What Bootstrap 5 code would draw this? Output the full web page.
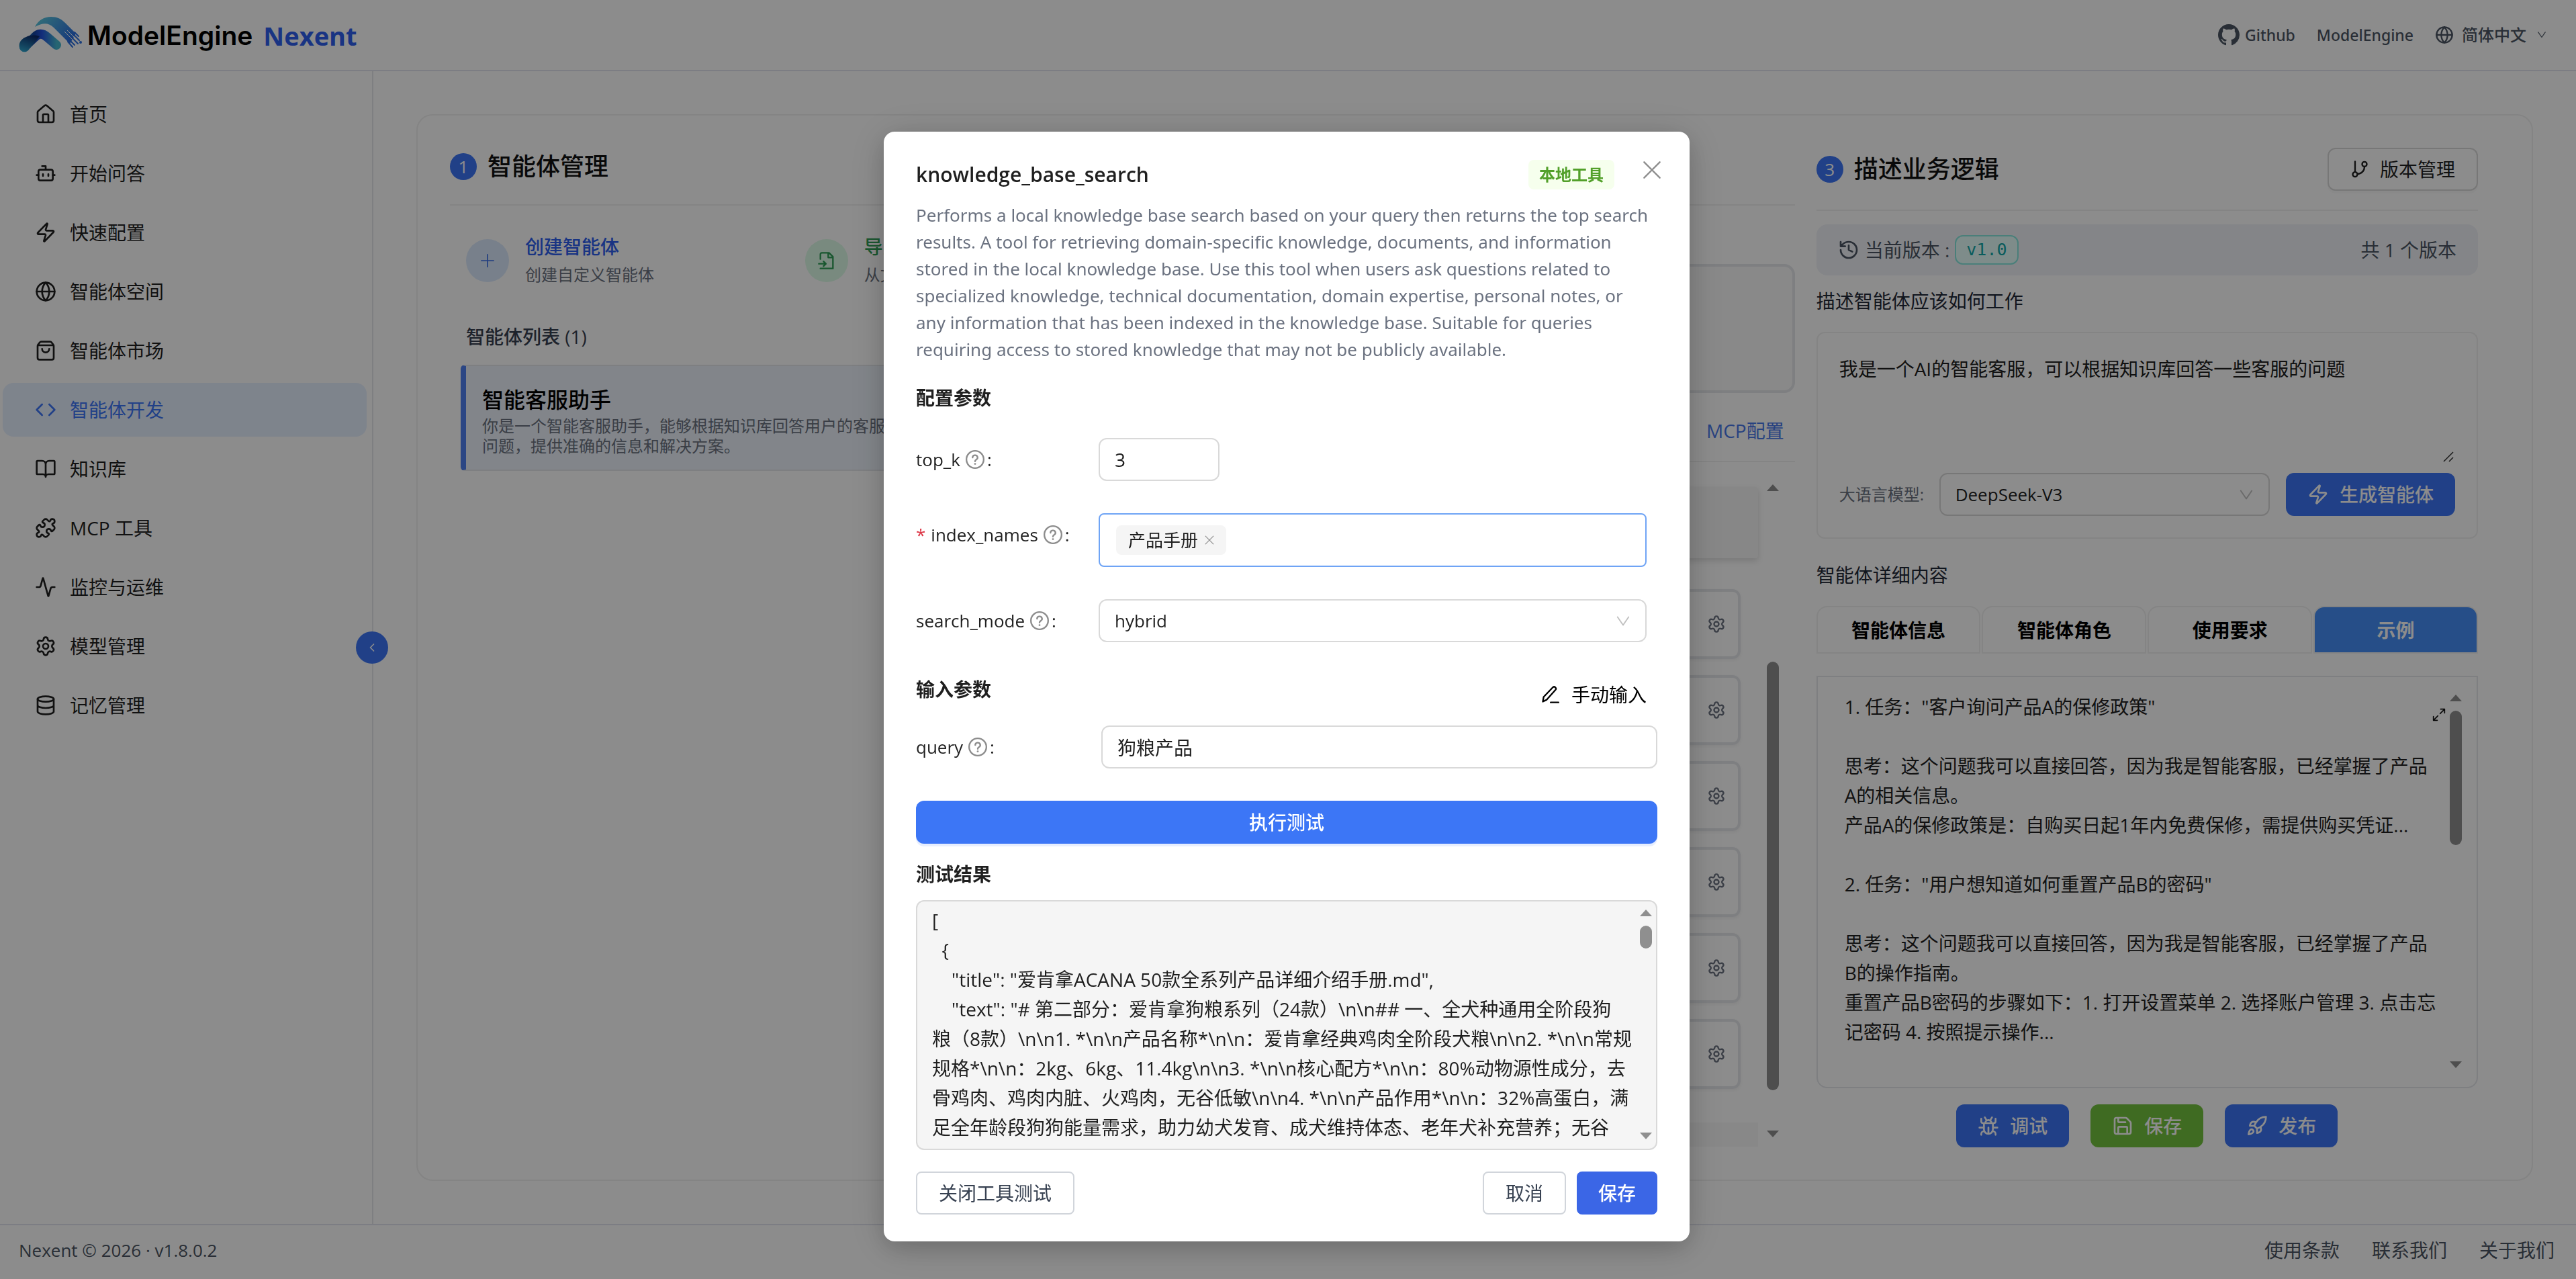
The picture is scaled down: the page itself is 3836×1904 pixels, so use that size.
<!DOCTYPE html>
<html lang="zh-CN">
<head>
<meta charset="utf-8">
<meta name="viewport" content="width=device-width, initial-scale=1">
<title>Nexent</title>
<link href="https://cdn.jsdelivr.net/npm/bootstrap@5.3.0/dist/css/bootstrap.min.css" rel="stylesheet">
<style>
  :root { --nx-blue: #3c76f6; --nx-line: #f0f0f0; --nx-edge: #e5e7eb; }
  body { font-family: "Open Sans", "Noto Sans CJK SC", sans-serif; font-size: 28px; line-height: 44px; color: #1f1f1f; background: #fff; }
  .latin { font-size: 26px; }
  svg { display: block; flex: none; }
  .ln { fill: none; stroke: currentColor; stroke-width: 2; stroke-linecap: round; stroke-linejoin: round; }
  .i14 { width: 14px; height: 14px; } .i20 { width: 20px; height: 20px; } .i28 { width: 28px; height: 28px; } .i32 { width: 32px; height: 32px; }
  a { color: inherit; text-decoration: none; }
  h1, h2, h3, p { margin: 0; }
  button { white-space: nowrap; }

  .site-head { height: 106px; padding: 0 44px 0 28px; border-bottom: 2px solid #e2e4ee; }
  .brand-name { font-size: 39px; font-weight: 600; color: #000; font-family: "Inter", sans-serif; padding-top: 2px; }
  .brand-sub { font-size: 38px; font-weight: 700; color: #2f5fee; padding-top: 2px; }
  .head-links { font-size: 24px; font-weight: 500; color: #4b5563; gap: 32px; }
  .head-links .latin { font-size: 23px; font-family: "Noto Sans", sans-serif; }

  .side { width: 556px; padding: 24px 8px 0 4px; border-right: 2px solid var(--nx-edge); }
  .side .nav { gap: 8px; }
  .side .nav-link { height: 80px; padding: 0 48px; gap: 20px; border-radius: 16px; color: #1f1f1f; width: 542px; }
  .side .nav-link.active { background: #e6f0ff; color: var(--nx-blue); }
  .fold { position: absolute; right: -24px; top: 834px; width: 48px; height: 48px; border: 0; border-radius: 50%; background: var(--nx-blue); color: #fff; padding: 0; }

  .board { margin: 64px; padding: 48px 80px 48px 48px; border: 2px solid var(--nx-line); border-radius: 24px; gap: 32px; }
  .pane { flex: 1 1 0; min-width: 0; }
  .pane-head { height: 86px; border-bottom: 2px solid var(--nx-line); gap: 16px; padding-bottom: 28px; }
  .pane-head.tall { height: 94px; }
  .pane-head h2 { font-size: 36px; font-weight: 500; color: #111; }
  .num { width: 40px; height: 40px; border-radius: 50%; background: var(--nx-blue); color: #fff; font-size: 26px; line-height: 40px; text-align: center; }

  .acts { padding: 40px 0 49px 24px; }
  .act { flex: 1 1 0; gap: 24px; border: 0; background: none; padding: 0; text-align: left; line-height: 42px; }
  .disc { width: 64px; height: 64px; border-radius: 50%; }
  .act strong { display: block; font-weight: 500; }
  .act small { display: block; font-size: 24px; color: #6b7280; }
  .act-new .disc { background: #dbeafe; color: #3b6fe8; } .act-new strong { color: #2f5fee; }
  .act-in .disc { background: #dcfce7; color: #2f9e57; } .act-in strong { color: #2f9e57; }
  .list-cap { color: #374151; font-weight: 500; }
  .agent { margin: 20px 0 0 16px; border: 2px solid var(--nx-edge); border-left: 8px solid #4f80f0; background: #edf3fb; padding: 26px 320px 20px 24px; border-radius: 6px 0 0 6px; }
  .agent h3 { font-size: 32px; font-weight: 500; line-height: 48px; color: #000; }
  .agent p { font-size: 24px; line-height: 30px; color: #6b7280; }

  .picked { height: 192px; margin-top: 87px; border: 4px solid var(--nx-edge); border-radius: 16px; background: #fafafa; }
  .tool-bar { height: 103px; border-bottom: 2px solid var(--nx-line); padding: 10px 16px 0 0; color: #4a78ea; }
  .tool-zone { padding: 37px 24px 0 0; }
  .tool-list { gap: 24px; margin: 46px 26px 0 0; }
  .tool-top { height: 106px; background: #f6f6f6; box-shadow: 0 4px 10px rgba(0,0,0,.14); border-radius: 4px; }
  .tool-end { height: 36px; background: #f7f7f7; margin-top: 50px; }
  .tool-card { height: 104px; border: 4px solid var(--nx-edge); border-radius: 12px; padding: 0 18px; color: #6b7280; box-shadow: 0 2px 4px rgba(0,0,0,.06); }

  .sb { width: 18px; color: #8f8f8f; }
  .sb svg { width: 18px; height: 10px; fill: currentColor; }
  .sb i { display: block; background: currentColor; border-radius: 9px; width: 18px; margin-top: 14px; }
  .sb-tools { margin: -4px 0 14px 13px; } .sb-tools i { height: 638px; margin: auto 0 60px; }
  .sb-sample { margin-left: 18px; } .sb-sample i { height: 200px; }
  .sb-out { margin-left: 8px; padding: 2px 0 4px; } .sb-out i { height: 34px; }

  .verbar { margin-top: 20px; height: 76px; border-radius: 16px; background: #f0f3f7; padding: 0 32px; color: #4b5563; }
  .ver { border: 2px solid #87e8de; border-radius: 12px; background: #e6fffb; color: #13a8a8; font-family: "DejaVu Sans Mono", monospace; font-size: 25px; line-height: 40px; padding: 0 15px; }
  .cap { color: #1f2937; }
  .cap-next { margin-top: 32px; }
  .brief { margin-top: 24px; border: 2px solid var(--nx-line); border-radius: 12px; padding: 24px 32px 32px; height: 308px; }
  .brief textarea { border: 0; padding: 7px 0; height: 168px; resize: none; outline: 0; line-height: 44px; color: #1f1f1f; }
  .grip { position: absolute; right: 2px; bottom: 0; width: 16px; height: 16px; }
  .llm-cap { font-size: 24px; color: #6b7280; width: 149px; }
  .nx-select { height: 64px; border: 2px solid #d9d9d9; border-radius: 12px; padding: 0 22px; appearance: none; background: #fff; color: #1f1f1f; width: 100%; font-size: 26px; }
  .chev { position: absolute; right: 24px; top: 22px; width: 22px; height: 22px; color: #bfbfbf; pointer-events: none; }
  .nx-btn { height: 64px; border: 0; border-radius: 12px; display: inline-flex; align-items: center; justify-content: center; gap: 16px; padding: 0 32px; line-height: 44px; color: #fff; font-weight: 500; font-size: 28px; }
  .nx-blue { background: var(--nx-blue); }
  .nx-green { background: #74c43e; }
  .nx-plain { background: #fff; border: 2px solid #d9d9d9; color: #1f1f1f; font-weight: 400; box-shadow: 0 4px 0 rgba(0,0,0,.02); }
  .tabs4 { gap: 2px; margin-top: 24px; }
  .tabs4 button { flex: 1 1 0; height: 71px; border: 2px solid var(--nx-line); border-radius: 16px 16px 0 0; background: #fff; font-weight: 700; color: #000; padding: 0; }
  .tabs4 button.active { background: #458ff8; color: #fff; }
  .sample { margin-top: 33px; border: 2px solid var(--nx-edge); border-radius: 0 0 16px 16px; flex: 1 1 0; padding: 26px 22px 28px 40px; }
  .sample-text { flex: 1 1 0; white-space: pre-wrap; margin-top: -4px; }
  .expand { position: absolute; right: 46px; top: 46px; border: 0; background: none; padding: 0; color: #111; }
  .pane-foot { gap: 32px; margin-top: 24px; }

  .site-foot { height: 82px; padding: 0 32px 6px 28px; border-top: 2px solid #e2e4ee; color: #4b5563; }

  .modal-backdrop.show { opacity: .45; }
  .modal { padding-right: 4px; }
  .modal-dialog { max-width: 1200px; margin: 196px auto 56px; }
  .modal-content { border: 0; border-radius: 16px; padding: 42px 48px 40px; box-shadow: 0 12px 32px rgba(0,0,0,.12), 0 6px 60px rgba(0,0,0,.16); color: #1f1f1f; }
  .modal-name { font-size: 30px; font-weight: 600; line-height: 44px; }
  .kind { background: #f6ffed; color: #52a02a; font-size: 24px; font-weight: 700; border-radius: 8px; padding: 0 16px; margin-right: 42px; }
  .x-btn { border: 0; background: none; padding: 0; color: #8c8c8c; margin: 0 -6px 14px 0; }
  .intro { font-family: "Noto Sans", sans-serif; font-size: 26px; line-height: 40px; color: #6b7280; margin-top: 18px; padding-right: 8px; }
  .sect { font-size: 28px; line-height: 44px; font-weight: 700; }
  .sect-conf { margin-top: 30px; }
  .sect-in { margin-top: 48px; padding-right: 16px; }
  .sect-out { margin-top: 23px; }
  .frow { display: flex; margin-top: 48px; padding-right: 16px; }
  .frow.first { margin-top: 38px; }
  .flab { width: 272px; flex: none; height: 64px; display: flex; align-items: center; gap: 8px; font-size: 26px; }
  .flab svg { color: #8c8c8c; margin-right: -4px; }
  .frow.wide { padding-right: 0; margin-top: 24px; } .frow.wide > .flab { width: 276px; }
  .nx-input { height: 64px; border: 2px solid #d9d9d9; border-radius: 12px; padding: 0 22px; color: #1f1f1f; background: #fff; }
  .nx-short { width: 180px; }
  .picks { height: 80px; border: 2px solid #6fa4f5; border-radius: 8px; padding: 0 24px; }
  .picks input { outline: 0; }
  .pick { background: #f5f5f5; border-radius: 8px; font-size: 26px; line-height: 44px; padding: 0 18px; gap: 10px; }
  .pick button { border: 0; background: none; padding: 0; color: #8c8c8c; }
  .link-btn { border: 0; background: none; padding: 0; gap: 18px; line-height: 44px; }
  .run { margin-top: 48px; box-shadow: 0 4px 0 rgba(60,118,246,.12); }
  .result { height: 372px; border: 2px solid #d9d9d9; border-radius: 12px; background: #f5f5f5; padding: 10px 6px 10px 22px; margin-top: 17px; }
  .result textarea { flex: 1 1 0; border: 0; background: none; resize: none; padding: 0; margin-top: -4px; outline: 0; overflow: hidden; line-height: 44px; color: #1f1f1f; }
  .modal-acts { margin-top: 32px; gap: 16px; }
  .foot-btn { border-radius: 8px; background: #3b66e6; }
  .foot-plain { background: #fff; border: 2px solid #d1d5db; color: #374151; font-weight: 400; }
</style>
</head>
<body class="d-flex flex-column min-vh-100">
<svg width="0" height="0" class="position-absolute" aria-hidden="true">
  <symbol id="home" viewBox="0 0 24 24"><path class="ln" d="M15 21v-8a1 1 0 0 0-1-1h-4a1 1 0 0 0-1 1v8M3 10a2 2 0 0 1 .7-1.5l7-6a2 2 0 0 1 2.6 0l7 6A2 2 0 0 1 21 10v9a2 2 0 0 1-2 2H5a2 2 0 0 1-2-2z"/></symbol>
  <symbol id="bot" viewBox="0 0 24 24"><path class="ln" d="M12 8V4H8M2 14h2M20 14h2M15 13v2M9 13v2"/><rect class="ln" x="4" y="8" width="16" height="12" rx="2"/></symbol>
  <symbol id="zap" viewBox="0 0 24 24"><path class="ln" d="M4 14a1 1 0 0 1-.78-1.63l9.9-10.2a.5.5 0 0 1 .86.46l-1.92 6.02A1 1 0 0 0 13 10h7a1 1 0 0 1 .78 1.63l-9.9 10.2a.5.5 0 0 1-.86-.46l1.92-6.02A1 1 0 0 0 11 14z"/></symbol>
  <symbol id="globe" viewBox="0 0 24 24"><circle class="ln" cx="12" cy="12" r="10"/><path class="ln" d="M12 2a14.5 14.5 0 0 0 0 20 14.500 14.500 0 0 0 0-20M2 12h20"/></symbol>
  <symbol id="bag" viewBox="0 0 24 24"><path class="ln" d="M16 10a4 4 0 0 1-8 0M3.100 6.030h17.800M3.400 5.470A2 2 0 0 0 3 6.670V20a2 2 0 0 0 2 2h14a2 2 0 0 0 2-2V6.670a2 2 0 0 0-.4-1.200l-2-2.670A2 2 0 0 0 17 2H7a2 2 0 0 0-1.600.8z"/></symbol>
  <symbol id="code" viewBox="0 0 24 24"><path class="ln" d="m16 18 6-6-6-6M8 6l-6 6 6 6"/></symbol>
  <symbol id="book" viewBox="0 0 24 24"><path class="ln" d="M12 7v14M3 18a1 1 0 0 1-1-1V4a1 1 0 0 1 1-1h5a4 4 0 0 1 4 4 4 4 0 0 1 4-4h5a1 1 0 0 1 1 1v13a1 1 0 0 1-1 1h-6a3 3 0 0 0-3 3 3 3 0 0 0-3-3z"/></symbol>
  <symbol id="puzzle" viewBox="0 0 24 24"><path class="ln" d="M15.390 4.390a1 1 0 0 0 1.680-.474 2.500 2.500 0 1 1 3.014 3.015 1 1 0 0 0-.474 1.680l1.683 1.682a2.414 2.414 0 0 1 0 3.414L19.610 15.390a1 1 0 0 1-1.680-.474 2.500 2.500 0 1 0-3.014 3.015 1 1 0 0 1 .474 1.680l-1.683 1.682a2.414 2.414 0 0 1-3.414 0L8.610 19.610a1 1 0 0 0-1.680.474 2.500 2.500 0 1 1-3.014-3.015 1 1 0 0 0 .474-1.680l-1.683-1.682a2.414 2.414 0 0 1 0-3.414L4.390 8.610a1 1 0 0 1 1.680.474 2.500 2.500 0 1 0 3.014-3.015 1 1 0 0 1-.474-1.680l1.683-1.682a2.414 2.414 0 0 1 3.414 0z"/></symbol>
  <symbol id="pulse" viewBox="0 0 24 24"><path class="ln" d="M22 12h-2.480a2 2 0 0 0-1.930 1.460l-2.350 8.360a.25.25 0 0 1-.48 0L9.240 2.180a.25.25 0 0 0-.48 0l-2.350 8.360A2 2 0 0 1 4.490 12H2"/></symbol>
  <symbol id="gear" viewBox="0 0 24 24"><path class="ln" d="M9.671 4.136a2.340 2.340 0 0 1 4.659 0 2.340 2.340 0 0 0 3.319 1.915 2.340 2.340 0 0 1 2.330 4.033 2.340 2.340 0 0 0 0 3.831 2.340 2.340 0 0 1-2.330 4.033 2.340 2.340 0 0 0-3.319 1.915 2.340 2.340 0 0 1-4.659 0 2.340 2.340 0 0 0-3.320-1.915 2.340 2.340 0 0 1-2.330-4.033 2.340 2.340 0 0 0 0-3.831A2.340 2.340 0 0 1 6.350 6.051a2.340 2.340 0 0 0 3.319-1.915"/><circle class="ln" cx="12" cy="12" r="3"/></symbol>
  <symbol id="db" viewBox="0 0 24 24"><ellipse class="ln" cx="12" cy="5" rx="9" ry="3"/><path class="ln" d="M3 5v14a9 3 0 0 0 18 0V5M3 12a9 3 0 0 0 18 0"/></symbol>
  <symbol id="left" viewBox="0 0 24 24"><path class="ln" d="m15 18-6-6 6-6"/></symbol>
  <symbol id="down" viewBox="0 0 24 24"><path class="ln" d="m3 5 9 13 9-13"/></symbol>
  <symbol id="cross" viewBox="0 0 24 24"><path class="ln" d="M2 2l20 20M22 2L2 22"/></symbol>
  <symbol id="plus" viewBox="0 0 24 24"><path class="ln" d="M12 1v22M1 12h22"/></symbol>
  <symbol id="help" viewBox="0 0 24 24"><circle class="ln" cx="12" cy="12" r="11"/><path class="ln" d="M8.800 9.600a3.200 3 0 1 1 4.700 2.600c-1 .6-1.500 1-1.500 2.200"/><circle cx="12" cy="17.600" r="1.200" fill="currentColor"/></symbol>
  <symbol id="import" viewBox="0 0 24 24"><path class="ln" d="M4 10V4a2 2 0 0 1 2-2h9l5 5v15H4M14 2v6h6M2 16h9M8 13l3 3-3 3"/></symbol>
  <symbol id="pen" viewBox="0 0 24 24"><path class="ln" d="M3 21l1-6L15.500 3a2.300 2.300 0 0 1 3.600 3L8 18.500zM13 22h10"/></symbol>
  <symbol id="branch" viewBox="0 0 24 24"><path class="ln" d="M6 2v13M18 9a9 9 0 0 1-9 9"/><circle class="ln" cx="18" cy="5.500" r="3"/><circle class="ln" cx="6" cy="18.500" r="3"/></symbol>
  <symbol id="history" viewBox="0 0 24 24"><path class="ln" d="M3 12a9 9 0 1 0 9-9 9.750 9.750 0 0 0-6.740 2.740L3 8M3 3v5h5M12 7v5l4 2"/></symbol>
  <symbol id="bug" viewBox="0 0 24 24"><path class="ln" d="M7 9h10v7a5 5 0 0 1-10 0zM8.500 9a3.500 3.500 0 0 1 7 0M12 14v7M2 14h5M17 14h5M4 4v3a2 2 0 0 0 2 2h1M20 4v3a2 2 0 0 1-2 2h-1M4 22v-1a3 3 0 0 1 3-3M20 22v-1a3 3 0 0 0-3-3M9.500 5 8 2.500M14.500 5 16 2.500"/></symbol>
  <symbol id="save" viewBox="0 0 24 24"><path class="ln" d="M15.200 3a2 2 0 0 1 1.400.6l3.800 3.800a2 2 0 0 1 .6 1.400V19a2 2 0 0 1-2 2H5a2 2 0 0 1-2-2V5a2 2 0 0 1 2-2zM17 21v-7a1 1 0 0 0-1-1H8a1 1 0 0 0-1 1v7M7 3v4a1 1 0 0 0 1 1h7"/></symbol>
  <symbol id="rocket" viewBox="0 0 24 24"><path class="ln" d="M4.500 16.500c-1.500 1.260-2 5-2 5s3.740-.5 5-2c.71-.84.7-2.130-.09-2.910a2.180 2.180 0 0 0-2.910-.09M12 15l-3-3a22 22 0 0 1 2-3.950A12.880 12.880 0 0 1 22 2c0 2.720-.78 7.500-6 11a22.350 22.350 0 0 1-4 2zM9 12H4s.55-3.030 2-4c1.620-1.080 5 0 5 0M12 15v5s3.030-.55 4-2c1.080-1.620 0-5 0-5"/></symbol>
  <symbol id="grow" viewBox="0 0 24 24"><path class="ln" d="M15 2h7v7M22 2l-8 8M9 22H2v-7M2 22l8-8"/></symbol>
  <symbol id="plug" viewBox="0 0 24 24"><path class="ln" d="M9 15l6-6M8 11l-4 4a4 4 0 0 0 5 5l4-4M16 13l4-4a4 4 0 0 0-5-5l-4 4"/></symbol>
  <symbol id="tup" viewBox="0 0 18 10"><path d="M9 0l9 10H0z"/></symbol>
  <symbol id="tdn" viewBox="0 0 18 10"><path d="M9 10l9-10H0z"/></symbol>
</svg>

<header class="site-head d-flex align-items-center justify-content-between">
  <div class="d-flex align-items-center">
    <svg width="94" height="54" viewBox="28 22 94 54" class="me-2" aria-hidden="true">
      <defs>
        <linearGradient id="ga" x1="0" x2="1" y1="0" y2=".6"><stop offset="0" stop-color="#5fd0dc"/><stop offset="1" stop-color="#2c6fe0"/></linearGradient>
        <linearGradient id="gb" x1="0" x2="1"><stop offset="0" stop-color="#2a90c8"/><stop offset=".3" stop-color="#12409a"/><stop offset=".55" stop-color="#2352e0"/><stop offset="1" stop-color="#45b8d0"/></linearGradient>
        <linearGradient id="gc" x1=".2" x2=".6" y1="1" y2="0"><stop offset="0" stop-color="#2fa6cf"/><stop offset="1" stop-color="#0d2a6b"/></linearGradient>
      </defs>
      <path fill="url(#ga)" d="M52 37C57 27 66 22 76 22c9 0 15 3 21 9l16 16-9 15-24-24c-8-8-17-7-28-1z"/>
      <path fill="none" stroke="#fff" stroke-width="1" d="M96 44l14 14M100 42l14 14"/>
      <path fill="none" stroke="#2c6fe0" stroke-width="2" stroke-linecap="round" d="M111 45l6 6M109 48l9 9M106 52l10 10M104 57l7 7M101 59l7 8"/>
      <circle cx="120" cy="60" r="2" fill="#2c6fe0"/>
      <path fill="none" stroke="url(#gb)" stroke-width="14" stroke-linecap="round" stroke-linejoin="round" d="M36 67l15-14q9-10 19-1l14 12"/>
      <path fill="url(#gc)" d="M29 68c-2-8 4-14 10-16 6-3 14-3 20-1L42 72c-4 4-11 3-13-4z"/>
    </svg>
    <span class="brand-name">ModelEngine</span>
    <span class="brand-sub ms-3">Nexent</span>
  </div>
  <nav class="head-links d-flex align-items-center">
    <a href="#" class="d-flex align-items-center gap-2"><svg width="32" height="32" viewBox="0 0 16 16" fill="currentColor"><path d="M8 0C3.580 0 0 3.580 0 8c0 3.540 2.290 6.530 5.470 7.590.4.070.55-.17.55-.38 0-.19-.01-.82-.01-1.490-2.010.37-2.530-.49-2.690-.94-.09-.23-.48-.94-.82-1.130-.28-.15-.68-.52-.01-.53.63-.01 1.080.58 1.230.82.72 1.210 1.870.87 2.330.66.070-.52.28-.87.51-1.070-1.780-.2-3.640-.89-3.640-3.950 0-.87.31-1.590.82-2.150-.08-.2-.36-1.020.08-2.120 0 0 .67-.21 2.200.82.64-.18 1.320-.27 2-.27s1.360.09 2 .27c1.530-1.040 2.200-.82 2.200-.82.44 1.100.16 1.920.08 2.120.51.56.82 1.270.82 2.150 0 3.070-1.870 3.750-3.650 3.950.29.25.54.73.54 1.480 0 1.070-.01 1.930-.01 2.200 0 .21.15.46.55.38A8.010 8.010 0 0 0 16 8c0-4.420-3.580-8-8-8"/></svg><span class="latin">Github</span></a>
    <a href="#" class="latin">ModelEngine</a>
    <a href="#" class="d-flex align-items-center"><svg class="i28 me-2"><use href="#globe"/></svg><span class="ms-1 me-3">简体中文</span><svg class="i14"><use href="#down"/></svg></a>
  </nav>
</header>

<div class="d-flex flex-grow-1">
  <aside class="side position-relative flex-shrink-0">
    <nav class="nav flex-column">
      <a class="nav-link d-flex align-items-center" href="#"><svg class="i32"><use href="#home"/></svg>首页</a>
      <a class="nav-link d-flex align-items-center" href="#"><svg class="i32"><use href="#bot"/></svg>开始问答</a>
      <a class="nav-link d-flex align-items-center" href="#"><svg class="i32"><use href="#zap"/></svg>快速配置</a>
      <a class="nav-link d-flex align-items-center" href="#"><svg class="i32"><use href="#globe"/></svg>智能体空间</a>
      <a class="nav-link d-flex align-items-center" href="#"><svg class="i32"><use href="#bag"/></svg>智能体市场</a>
      <a class="nav-link d-flex align-items-center active" href="#"><svg class="i32"><use href="#code"/></svg>智能体开发</a>
      <a class="nav-link d-flex align-items-center" href="#"><svg class="i32"><use href="#book"/></svg>知识库</a>
      <a class="nav-link d-flex align-items-center" href="#"><svg class="i32"><use href="#puzzle"/></svg>MCP 工具</a>
      <a class="nav-link d-flex align-items-center" href="#"><svg class="i32"><use href="#pulse"/></svg>监控与运维</a>
      <a class="nav-link d-flex align-items-center" href="#"><svg class="i32"><use href="#gear"/></svg>模型管理</a>
      <a class="nav-link d-flex align-items-center" href="#"><svg class="i32"><use href="#db"/></svg>记忆管理</a>
    </nav>
    <button class="fold d-flex align-items-center justify-content-center" aria-label="收起"><svg class="i20"><use href="#left"/></svg></button>
  </aside>

  <main class="board d-flex flex-grow-1">
    <section class="pane">
      <div class="pane-head d-flex align-items-center"><span class="num">1</span><h2>智能体管理</h2></div>
      <div class="acts d-flex gap-5">
        <button class="act act-new d-flex align-items-center"><span class="disc d-flex align-items-center justify-content-center"><svg class="i20"><use href="#plus"/></svg></span><span><strong>创建智能体</strong><small>创建自定义智能体</small></span></button>
        <button class="act act-in d-flex align-items-center"><span class="disc d-flex align-items-center justify-content-center"><svg class="i28"><use href="#import"/></svg></span><span><strong>导入智能体</strong><small>从文件导入</small></span></button>
      </div>
      <div class="list-cap ps-4">智能体列表 (1)</div>
      <div class="agent"><h3>智能客服助手</h3><p>你是一个智能客服助手，能够根据知识库回答用户的客服问题，提供准确的信息和解决方案。</p></div>
    </section>

    <section class="pane">
      <div class="pane-head"></div>
      <div class="picked"></div>
      <div class="tool-bar d-flex align-items-center justify-content-end gap-4"><svg class="i28"><use href="#plug"/></svg><a href="#">MCP配置</a></div>
      <div class="tool-zone d-flex">
        <div class="flex-grow-1">
          <div class="tool-top"></div>
          <div class="tool-list d-flex flex-column">
            <div class="tool-card d-flex align-items-center justify-content-end"><svg class="i28"><use href="#gear"/></svg></div>
            <div class="tool-card d-flex align-items-center justify-content-end"><svg class="i28"><use href="#gear"/></svg></div>
            <div class="tool-card d-flex align-items-center justify-content-end"><svg class="i28"><use href="#gear"/></svg></div>
            <div class="tool-card d-flex align-items-center justify-content-end"><svg class="i28"><use href="#gear"/></svg></div>
            <div class="tool-card d-flex align-items-center justify-content-end"><svg class="i28"><use href="#gear"/></svg></div>
            <div class="tool-card d-flex align-items-center justify-content-end"><svg class="i28"><use href="#gear"/></svg></div>
          </div>
          <div class="tool-end"></div>
        </div>
        <div class="sb sb-tools d-flex flex-column"><svg><use href="#tup"/></svg><i></i><svg><use href="#tdn"/></svg></div>
      </div>
    </section>

    <section class="pane d-flex flex-column">
      <div class="pane-head tall d-flex align-items-center"><span class="num">3</span><h2>描述业务逻辑</h2><button class="nx-btn nx-plain ms-auto"><svg class="i28"><use href="#branch"/></svg>版本管理</button></div>
      <div class="verbar d-flex align-items-center"><svg class="i32 me-2"><use href="#history"/></svg>当前版本 :<span class="ver ms-2">v1.0</span><span class="ms-auto">共 1 个版本</span></div>
      <label class="cap mt-3" for="brief">描述智能体应该如何工作</label>
      <div class="brief d-flex flex-column justify-content-between">
        <div class="position-relative d-flex"><textarea id="brief" class="w-100">我是一个AI的智能客服，可以根据知识库回答一些客服的问题</textarea><svg class="grip" viewBox="0 0 16 16"><path d="M1 15L15 1M9 15l6-6" stroke="#333" stroke-width="1.500"/></svg></div>
        <div class="d-flex align-items-center">
          <label class="llm-cap" for="llm">大语言模型:</label>
          <div class="position-relative flex-grow-1 me-4"><select id="llm" class="nx-select"><option>DeepSeek-V3</option></select><svg class="chev"><use href="#down"/></svg></div>
          <button class="nx-btn nx-blue"><svg class="i32"><use href="#zap"/></svg>生成智能体</button>
        </div>
      </div>
      <div class="cap cap-next">智能体详细内容</div>
      <div class="tabs4 d-flex" role="tablist"><button role="tab">智能体信息</button><button role="tab">智能体角色</button><button role="tab">使用要求</button><button role="tab" class="active">示例</button></div>
      <div class="sample position-relative d-flex">
        <div class="sample-text">1. 任务："客户询问产品A的保修政策"

思考：这个问题我可以直接回答，因为我是智能客服，已经掌握了产品A的相关信息。
产品A的保修政策是：自购买日起1年内免费保修，需提供购买凭证...

2. 任务："用户想知道如何重置产品B的密码"

思考：这个问题我可以直接回答，因为我是智能客服，已经掌握了产品B的操作指南。
重置产品B密码的步骤如下：1. 打开设置菜单 2. 选择账户管理 3. 点击忘记密码 4. 按照提示操作...</div>
        <div class="sb sb-sample d-flex flex-column"><svg><use href="#tup"/></svg><i></i><svg class="mt-auto"><use href="#tdn"/></svg></div>
        <button class="expand" aria-label="展开"><svg class="i20"><use href="#grow"/></svg></button>
      </div>
      <div class="pane-foot d-flex justify-content-center">
        <button class="nx-btn nx-blue"><svg class="i32"><use href="#bug"/></svg>调试</button>
        <button class="nx-btn nx-green"><svg class="i32"><use href="#save"/></svg>保存</button>
        <button class="nx-btn nx-blue"><svg class="i32"><use href="#rocket"/></svg>发布</button>
      </div>
    </section>
  </main>
</div>

<footer class="site-foot d-flex align-items-center justify-content-between">
  <span class="latin">Nexent © 2026 · v1.8.0.2</span>
  <div class="d-flex gap-5"><a href="#">使用条款</a><a href="#">联系我们</a><a href="#">关于我们</a></div>
</footer>

<div class="modal-backdrop show"></div>
<div class="modal show d-block" tabindex="-1" role="dialog" aria-labelledby="tool-name">
  <div class="modal-dialog">
    <div class="modal-content">
      <div class="d-flex align-items-center">
        <h1 class="modal-name me-auto" id="tool-name">knowledge_base_search</h1>
        <span class="kind">本地工具</span>
        <button class="x-btn" aria-label="关闭"><svg class="i28"><use href="#cross"/></svg></button>
      </div>
      <p class="intro">Performs a local knowledge base search based on your query then returns the top search results. A tool for retrieving domain-specific knowledge, documents, and information stored in the local knowledge base. Use this tool when users ask questions related to specialized knowledge, technical documentation, domain expertise, personal notes, or any information that has been indexed in the knowledge base. Suitable for queries requiring access to stored knowledge that may not be publicly available.</p>
      <h2 class="sect sect-conf">配置参数</h2>
      <div class="frow first"><label class="flab" for="topk">top_k <svg class="i28"><use href="#help"/></svg> :</label><input id="topk" class="nx-input nx-short" value="3"></div>
      <div class="frow"><label class="flab" for="idx"><span class="text-danger">*</span> index_names <svg class="i28"><use href="#help"/></svg> :</label>
        <div class="picks d-flex align-items-center flex-grow-1"><span class="pick d-flex align-items-center">产品手册<button aria-label="移除"><svg class="i14"><use href="#cross"/></svg></button></span><input id="idx" class="border-0 flex-grow-1"></div></div>
      <div class="frow"><label class="flab" for="mode">search_mode <svg class="i28"><use href="#help"/></svg> :</label><div class="position-relative flex-grow-1"><select id="mode" class="nx-select"><option>hybrid</option></select><svg class="chev"><use href="#down"/></svg></div></div>
      <div class="sect-in d-flex justify-content-between"><h2 class="sect">输入参数</h2><button class="link-btn d-flex align-items-center mt-2"><svg class="i28"><use href="#pen"/></svg>手动输入</button></div>
      <div class="frow wide"><label class="flab" for="q">query <svg class="i28"><use href="#help"/></svg> :</label><input id="q" class="nx-input flex-grow-1" value="狗粮产品"></div>
      <button class="nx-btn nx-blue w-100 run">执行测试</button>
      <label class="sect sect-out" for="out">测试结果</label>
      <div class="result d-flex">
        <textarea id="out" readonly>[
  {
    "title": "爱肯拿ACANA 50款全系列产品详细介绍手册.md",
    "text": "# 第二部分：爱肯拿狗粮系列（24款）\n\n## 一、全犬种通用全阶段狗
粮（8款）\n\n1. *\n\n产品名称*\n\n：爱肯拿经典鸡肉全阶段犬粮\n\n2. *\n\n常规
规格*\n\n：2kg、6kg、11.4kg\n\n3. *\n\n核心配方*\n\n：80%动物源性成分，去
骨鸡肉、鸡肉内脏、火鸡肉，无谷低敏\n\n4. *\n\n产品作用*\n\n：32%高蛋白，满
足全年龄段狗狗能量需求，助力幼犬发育、成犬维持体态、老年犬补充营养；无谷</textarea>
        <div class="sb sb-out d-flex flex-column"><svg><use href="#tup"/></svg><i></i><svg class="mt-auto"><use href="#tdn"/></svg></div>
      </div>
      <div class="modal-acts d-flex"><button class="nx-btn foot-btn foot-plain me-auto">关闭工具测试</button><button class="nx-btn foot-btn foot-plain">取消</button><button class="nx-btn foot-btn">保存</button></div>
    </div>
  </div>
</div>
<script src="https://cdn.jsdelivr.net/npm/bootstrap@5.3.0/dist/js/bootstrap.bundle.min.js"></script>
</body>
</html>
